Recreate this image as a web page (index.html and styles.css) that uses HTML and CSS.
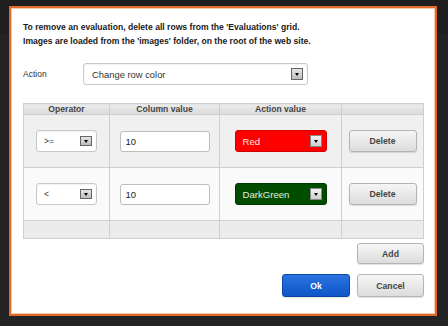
FILE: index.html
```html
<!DOCTYPE html>
<html lang="en">
<head>
    <meta charset="UTF-8">
    <title>Evaluations</title>
    <link rel="stylesheet" href="styles.css">
</head>
<body>

    <div class="dialog">
        <p class="intro">
            To remove an evaluation, delete all rows from the 'Evaluations' grid.<br>
            Images are loaded from the 'images' folder, on the root of the web site.
        </p>

        <div class="action-row">
            <span class="action-label">Action</span>
            <div class="select select-wide">
                <span class="select-text">Change row color</span>
                <span class="drop"></span>
            </div>
        </div>

        <table class="grid">
            <thead>
                <tr>
                    <th class="col-op">Operator</th>
                    <th class="col-val">Column value</th>
                    <th class="col-act">Action value</th>
                    <th class="col-btn"></th>
                </tr>
            </thead>
            <tbody>
                <tr class="row-alt">
                    <td>
                        <div class="select select-op">
                            <span class="select-text">&gt;=</span>
                            <span class="drop"></span>
                        </div>
                    </td>
                    <td><div class="textbox">10</div></td>
                    <td>
                        <div class="select select-color color-red">
                            <span class="select-text">Red</span>
                            <span class="drop"></span>
                        </div>
                    </td>
                    <td><button class="btn btn-delete">Delete</button></td>
                </tr>
                <tr>
                    <td>
                        <div class="select select-op">
                            <span class="select-text">&lt;</span>
                            <span class="drop"></span>
                        </div>
                    </td>
                    <td><div class="textbox">10</div></td>
                    <td>
                        <div class="select select-color color-green">
                            <span class="select-text">DarkGreen</span>
                            <span class="drop"></span>
                        </div>
                    </td>
                    <td><button class="btn btn-delete">Delete</button></td>
                </tr>
                <tr class="row-foot">
                    <td></td>
                    <td></td>
                    <td></td>
                    <td></td>
                </tr>
            </tbody>
        </table>

        <div class="add-row">
            <button class="btn">Add</button>
        </div>

        <div class="footer">
            <button class="btn btn-primary">Ok</button>
            <button class="btn">Cancel</button>
        </div>
    </div>

</body>
</html>
```

FILE: styles.css
```css
body {
    margin: 0;
    padding: 6px 0 0 9px;
    height: 326px;
    box-sizing: border-box;
    overflow: hidden;
    background-color: #1b1b1b;
    background-image: linear-gradient(#1e1e1e 0, #1e1e1e 33px, #232323 33px, #232323 100%);
    font-family: 'Liberation Sans', Arial, sans-serif;
    color: #222;
}

.dialog {
    box-sizing: border-box;
    width: 428px;
    height: 310px;
    background-color: #fff;
    border: 2px solid #e2692a;
    box-shadow: inset 0 0 0 1px #f7c9a8;
    padding: 12px 11px 0 12px;
}

.intro {
    margin: 0;
    font-size: 8.6px;
    font-weight: bold;
    line-height: 14px;
    color: #1a1a1a;
}

.action-row {
    display: flex;
    align-items: center;
    margin-top: 15px;
}

.action-label {
    width: 60px;
    font-size: 8.5px;
    color: #333;
}

.select {
    box-sizing: border-box;
    display: flex;
    align-items: center;
    justify-content: space-between;
    background-color: #fff;
    border: 1px solid #c8c8c8;
    border-radius: 3px;
    box-shadow: inset 0 1px 2px rgba(0, 0, 0, 0.06);
}

.select-wide {
    width: 225px;
    height: 22px;
    padding: 0 4px 0 8px;
    font-size: 9.4px;
    color: #333;
}

.drop {
    box-sizing: border-box;
    position: relative;
    width: 12px;
    height: 12px;
    border: 1px solid #666;
    background: linear-gradient(#e4e4e4, #bdbdbd);
}

.drop::after {
    content: '';
    position: absolute;
    left: 3px;
    top: 4px;
    border-left: 2.5px solid transparent;
    border-right: 2.5px solid transparent;
    border-top: 3px solid #000;
}

.grid {
    margin-top: 18px;
    width: 401px;
    border-collapse: collapse;
    table-layout: fixed;
}

.grid th,
.grid td {
    border: 1px solid #cfcfcf;
    padding: 0;
    text-align: center;
    vertical-align: middle;
}

.grid th {
    height: 10px;
    font-size: 8.6px;
    font-weight: bold;
    line-height: 10px;
    color: #444;
    background: linear-gradient(#ececec, #dadada);
}

.col-op { width: 85px; }
.col-val { width: 109px; }
.col-act { width: 121px; }

.grid tbody tr {
    height: 53px;
    background-color: #fafafa;
}

.grid tbody tr.row-alt {
    background-color: #f0f0f0;
}

.grid tbody tr.row-foot {
    height: 18px;
    background-color: #ececec;
}

.grid td > * {
    margin: 0 auto;
}

.select-op {
    width: 61px;
    height: 22px;
    padding: 0 4px 0 7px;
    font-size: 8.5px;
    color: #333;
}

.select-op .drop {
    height: 10px;
}

.select-op .drop::after {
    top: 3px;
}

.textbox {
    box-sizing: border-box;
    width: 90px;
    height: 21px;
    border: 1px solid #bdbdbd;
    border-radius: 3px;
    background-color: #fff;
    padding-left: 5px;
    text-align: left;
    font-size: 9.5px;
    line-height: 19px;
    color: #222;
}

.select-color {
    width: 92px;
    height: 22px;
    padding: 0 4px 0 7px;
    font-size: 9.6px;
}

.color-red {
    background-color: #ff0000;
    border-color: #d40000;
    color: #fbe3e3;
}

.color-green {
    background-color: #004d00;
    border-color: #003800;
    color: #e0eee0;
}

.color-red .drop,
.color-green .drop {
    background: linear-gradient(#f4f4f4, #cfcfcf);
    border-color: #888;
}

.btn {
    box-sizing: border-box;
    width: 68px;
    height: 22px;
    border: 1px solid #b4b4b4;
    border-radius: 3px;
    background: linear-gradient(#f6f6f6, #dcdcdc);
    box-shadow: 0 1px 1px rgba(0, 0, 0, 0.12);
    font-family: 'Liberation Sans', Arial, sans-serif;
    font-size: 8.7px;
    font-weight: bold;
    color: #444;
    padding: 0;
    cursor: pointer;
}

.btn-delete {
    display: block;
}

.add-row {
    display: flex;
    justify-content: flex-end;
    margin-top: 4px;
}

.add-row .btn {
    width: 67px;
    height: 21px;
}

.footer {
    display: flex;
    justify-content: flex-end;
    gap: 7px;
    margin-top: 10px;
}

.footer .btn {
    width: 68px;
    height: 23px;
}

.footer .btn + .btn {
    width: 67px;
}

.btn-primary {
    background: linear-gradient(#2a74e0, #0f56c8);
    border-color: #0c47a8;
    color: #fff;
}
```
